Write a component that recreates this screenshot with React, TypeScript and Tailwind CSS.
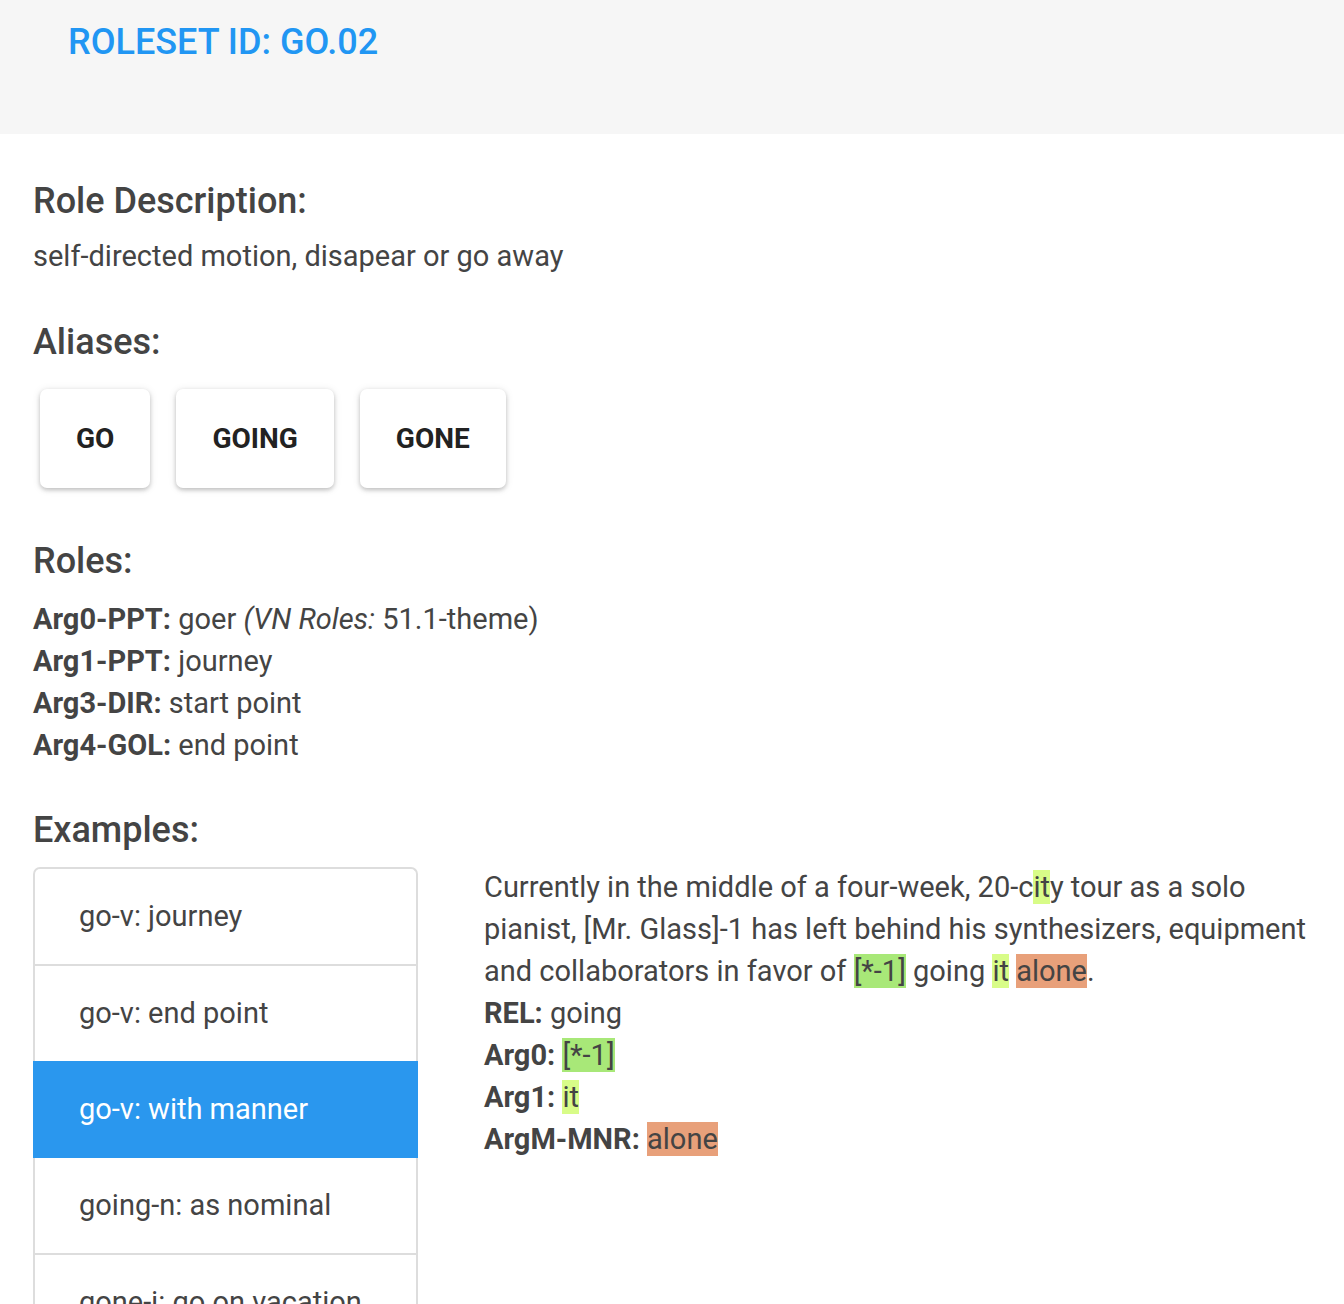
import React from 'react';

const aliases = ['GO', 'GOING', 'GONE'];

const roles = [
  { arg: 'Arg0-PPT', desc: 'goer', vn: '51.1-theme' },
  { arg: 'Arg1-PPT', desc: 'journey' },
  { arg: 'Arg3-DIR', desc: 'start point' },
  { arg: 'Arg4-GOL', desc: 'end point' },
];

const examples = [
  'go-v: journey',
  'go-v: end point',
  'go-v: with manner',
  'going-n: as nominal',
  'gone-j: go on vacation',
];

const green = 'bg-[#a8e878]';
const lime = 'bg-[#d8fc88]';
const orange = 'bg-[#e8a07a]';

const App = () => {
  const selected = 2;

  return (
    <div className="min-h-screen bg-white text-[#444]" style={{ fontFamily: 'Roboto, "Liberation Sans", sans-serif' }}>
      <div className="h-[134px] bg-[#f6f6f6] px-[68px] pt-[21px]">
        <h1 className="text-[36px] leading-[42px] font-medium text-[#2196f3]">ROLESET ID: GO.02</h1>
      </div>

      <div className="px-[33px]">
        <h2 className="mt-[47px] text-[36px] leading-[40px] font-medium">Role Description:</h2>
        <p className="mt-[14px] text-[29px] leading-[42px]">self-directed motion, disapear or go away</p>

        <h2 className="mt-[45px] text-[36px] leading-[40px] font-medium">Aliases:</h2>
        <div className="mt-[27px] ml-[7px] flex gap-[26px]">
          {aliases.map((a) => (
            <button
              key={a}
              className="h-[99px] px-[36px] rounded-[7px] bg-white text-[28px] font-bold text-[#222] shadow-[0_2px_4px_rgba(0,0,0,0.2),0_1px_8px_rgba(0,0,0,0.1)]"
            >
              {a}
            </button>
          ))}
        </div>

        <h2 className="mt-[53px] text-[36px] leading-[40px] font-medium">Roles:</h2>
        <div className="mt-[17px] text-[29px] leading-[42px]">
          {roles.map((r) => (
            <div key={r.arg}>
              <span className="font-bold">{r.arg}:</span> {r.desc}
              {r.vn && (
                <>
                  {' '}
                  <i>(VN Roles:</i> {r.vn})
                </>
              )}
            </div>
          ))}
        </div>

        <h2 className="mt-[44px] text-[36px] leading-[40px] font-medium">Examples:</h2>
        <div className="mt-[17px] flex items-start gap-[66px]">
          <div className="w-[385px] shrink-0 border-x-2 border-t-2 border-[#ddd] rounded-t-[7px]">
            {examples.map((e, i) =>
              i === selected ? (
                <div
                  key={e}
                  className="-mx-[2px] -mt-[2px] flex h-[97px] items-center bg-[#2a97ee] pl-[46px] text-[29px] text-white"
                >
                  {e}
                </div>
              ) : (
                <div key={e} className="flex h-[97px] items-center border-b-2 border-[#ddd] pl-[44px] text-[29px]">
                  {e}
                </div>
              )
            )}
          </div>

          <div className="-mt-[1px] w-[840px] text-[29px] leading-[42px]">
            <p>
              Currently in the middle of a four-week, 20-c<span className={lime}>it</span>y tour as a solo pianist,
              [Mr. Glass]-1 has left behind his synthesizers, equipment and collaborators in favor of{' '}
              <span className={green}>[*-1]</span> going <span className={lime}>it</span>{' '}
              <span className={orange}>alone</span>.
            </p>
            <div>
              <span className="font-bold">REL:</span> going
            </div>
            <div>
              <span className="font-bold">Arg0:</span> <span className={green}>[*-1]</span>
            </div>
            <div>
              <span className="font-bold">Arg1:</span> <span className={lime}>it</span>
            </div>
            <div>
              <span className="font-bold">ArgM-MNR:</span> <span className={orange}>alone</span>
            </div>
          </div>
        </div>
      </div>
    </div>
  );
};

export default App;
